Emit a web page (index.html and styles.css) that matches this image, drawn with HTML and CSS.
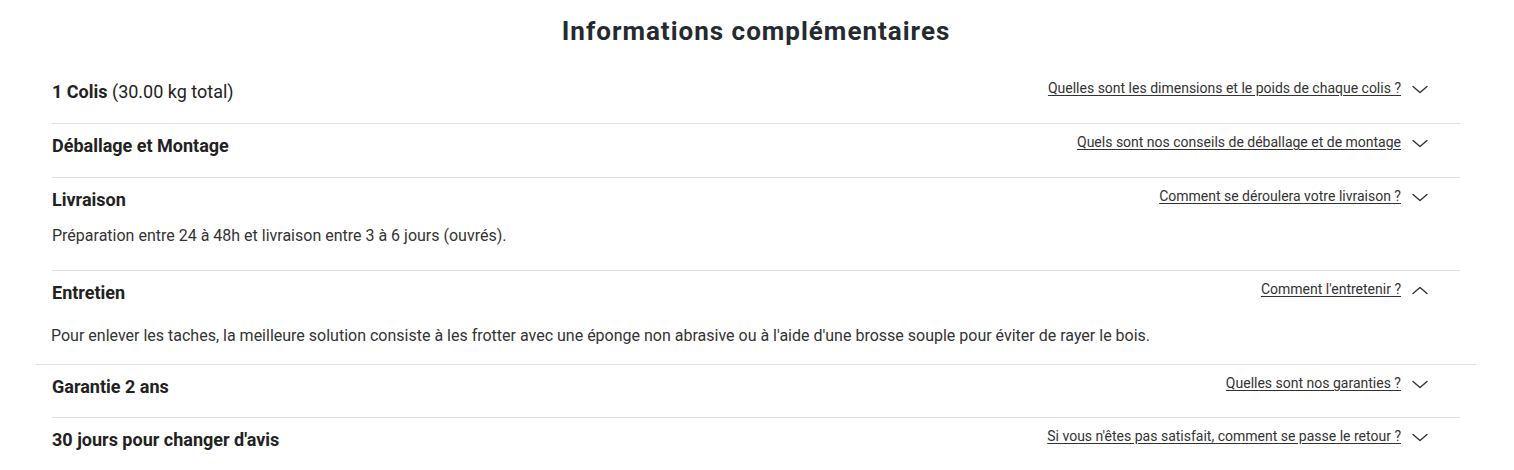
FILE: index.html
```html
<!DOCTYPE html>
<html lang="fr">
<head>
<meta charset="utf-8">
<title>Informations complémentaires</title>
<link rel="stylesheet" href="styles.css">
</head>
<body>
<section class="infos">
  <h2 class="infos-title">Informations complémentaires</h2>
  <div class="acc">
    <div class="acc-item acc-first">
      <div class="acc-head">
        <div class="acc-name"><b>1 Colis</b> (30.00 kg total)</div>
        <div class="acc-action">
          <a class="acc-link" href="#">Quelles sont les dimensions et le poids de chaque colis ?</a>
          <svg class="chev" width="16" height="20" viewBox="0 0 16 20"><path d="M1 8.5 L8 14.5 L15 8.5" /></svg>
        </div>
      </div>
    </div>
    <div class="acc-item">
      <div class="acc-head">
        <div class="acc-name"><b>Déballage et Montage</b></div>
        <div class="acc-action">
          <a class="acc-link" href="#">Quels sont nos conseils de déballage et de montage</a>
          <svg class="chev" width="16" height="20" viewBox="0 0 16 20"><path d="M1 8.5 L8 14.5 L15 8.5" /></svg>
        </div>
      </div>
    </div>
    <div class="acc-item acc-open">
      <div class="acc-head">
        <div class="acc-name"><b>Livraison</b></div>
        <div class="acc-action">
          <a class="acc-link" href="#">Comment se déroulera votre livraison ?</a>
          <svg class="chev" width="16" height="20" viewBox="0 0 16 20"><path d="M1 8.5 L8 14.5 L15 8.5" /></svg>
        </div>
      </div>
      <p class="acc-body">Préparation entre 24 à 48h et livraison entre 3 à 6 jours (ouvrés).</p>
    </div>
    <div class="acc-item acc-open acc-wide">
      <div class="acc-head">
        <div class="acc-name"><b>Entretien</b></div>
        <div class="acc-action">
          <a class="acc-link" href="#">Comment l'entretenir ?</a>
          <svg class="chev" width="16" height="20" viewBox="0 0 16 20"><path d="M1 14.5 L8 8.5 L15 14.5" /></svg>
        </div>
      </div>
      <p class="acc-body">Pour enlever les taches, la meilleure solution consiste à les frotter avec une éponge non abrasive ou à l'aide d'une brosse souple pour éviter de rayer le bois.</p>
    </div>
    <div class="acc-item acc-after-wide">
      <div class="acc-head">
        <div class="acc-name"><b>Garantie 2 ans</b></div>
        <div class="acc-action">
          <a class="acc-link" href="#">Quelles sont nos garanties ?</a>
          <svg class="chev" width="16" height="20" viewBox="0 0 16 20"><path d="M1 8.5 L8 14.5 L15 8.5" /></svg>
        </div>
      </div>
    </div>
    <div class="acc-item acc-last">
      <div class="acc-head">
        <div class="acc-name"><b>30 jours pour changer d'avis</b></div>
        <div class="acc-action">
          <a class="acc-link" href="#">Si vous n'êtes pas satisfait, comment se passe le retour ?</a>
          <svg class="chev" width="16" height="20" viewBox="0 0 16 20"><path d="M1 8.5 L8 14.5 L15 8.5" /></svg>
        </div>
      </div>
    </div>
  </div>
</section>
</body>
</html>
```

FILE: styles.css
```css
* { box-sizing: border-box; }
html, body { margin: 0; padding: 0; background: #fff; }
body {
  font-family: Roboto, "Liberation Sans", Arial, sans-serif;
  color: #222;
}
.infos {
  margin: 0 38px 0 36px;
}
.infos-title {
  margin: 15px 0 22px;
  text-align: center;
  font-size: 26px;
  line-height: 32px;
  font-weight: 700;
  letter-spacing: 1px;
  color: #252a31;
}
.acc-item {
  margin: 0 16px;
  border-bottom: 1px solid #e2e2e2;
}
.acc-first { border-top: 1px solid transparent; }
.acc-last { border-bottom: none; }
.acc-head {
  display: flex;
  justify-content: space-between;
  align-items: flex-start;
  padding: 7px 32px 19px 0;
}
.acc-after-wide .acc-head { padding-bottom: 18px; }
.acc-name {
  margin-top: 3px;
  font-size: 18px;
  line-height: 24px;
  font-weight: 400;
  color: #222;
}
.acc-name b { font-weight: 700; }
.acc-action {
  display: flex;
  align-items: center;
  gap: 11px;
  height: 20px;
  margin-top: 1px;
}
.acc-link {
  font-size: 14px;
  line-height: 20px;
  color: #333;
  text-decoration: underline;
  text-underline-offset: 2px;
}
.chev { display: block; }
.chev path {
  fill: none;
  stroke: #333;
  stroke-width: 1.4;
  stroke-linecap: round;
  stroke-linejoin: round;
}
.acc-open .acc-head { padding-bottom: 0; }
.acc-body {
  margin: 0;
  padding: 11.5px 0 22.5px;
  font-size: 16px;
  line-height: 24px;
  color: #333;
}
.acc-wide {
  margin: 0;
  padding: 0 16px;
}
.acc-wide .acc-body {
  padding: 18.5px 0 16.5px;
  margin-left: -1px;
}
```
